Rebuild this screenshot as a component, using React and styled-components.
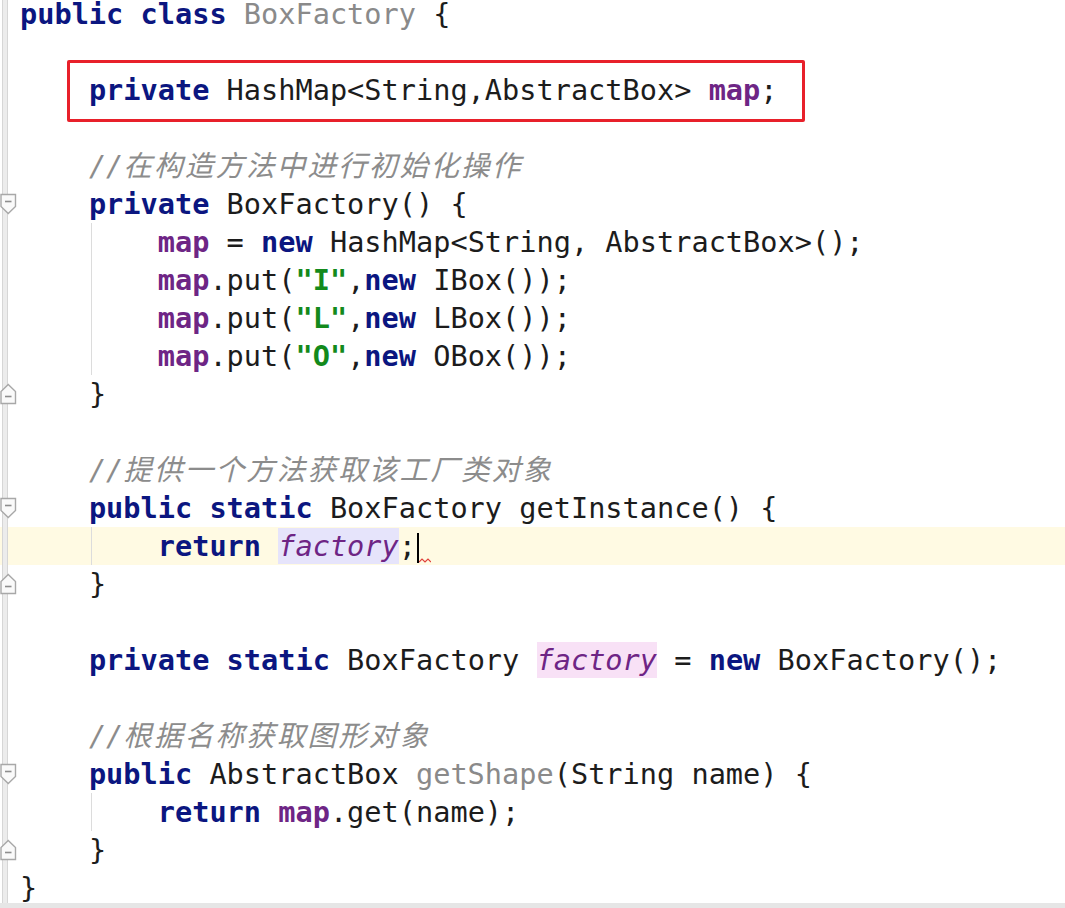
import React from "react";
import styled, { createGlobalStyle, css } from "styled-components";

const GlobalStyle = createGlobalStyle`
  html, body {
    margin: 0;
    padding: 0;
    background: #ffffff;
  }
`;

const LINE = 38;

const Editor = styled.div`
  position: relative;
  width: 1065px;
  height: 908px;
  box-sizing: border-box;
  border-bottom: 5px solid #e6e6e6;
  overflow: hidden;
  background: #fff;
`;

const Lines = styled.div`
  display: flex;
  flex-direction: column;
  margin-top: -5px;
`;

const Row = styled.div`
  position: relative;
  display: grid;
  grid-template-columns: 20px 1fr;
  height: ${LINE}px;
  align-items: center;
  background: ${(p) => (p.$current ? "#fffae3" : "transparent")};
  ${(p) =>
    p.$guide &&
    css`
      background-image: linear-gradient(
        to right,
        transparent 91px,
        #dcdcdc 91px,
        #dcdcdc 92px,
        transparent 92px
      );
    `}
`;

const Gutter = styled.div`
  height: 100%;
  display: flex;
  align-items: center;
  background: linear-gradient(
    to right,
    transparent 2px,
    #d6d6d6 2px,
    #d6d6d6 3px,
    #ececec 3px,
    #ececec 7px,
    #d6d6d6 7px,
    #d6d6d6 8px,
    transparent 8px
  );
`;

const Code = styled.div`
  font-family: "DejaVu Sans Mono", "Noto Sans CJK SC", monospace;
  font-size: 28.6px;
  line-height: ${LINE}px;
  height: ${LINE}px;
  white-space: pre;
  color: #1c1c1c;
`;

const Kw = styled.span`
  color: #0b1680;
  font-weight: bold;
`;

const Field = styled.span`
  color: #6e2585;
  font-weight: bold;
`;

const StaticField = styled.span`
  color: #6e2585;
  font-style: italic;
  display: inline-block;
  vertical-align: top;
  margin-top: 1px;
  height: ${LINE - 2}px;
  line-height: ${LINE - 2}px;
  background: ${(p) => p.$bg || "transparent"};
`;

const Str = styled.span`
  color: #138a1c;
  font-weight: bold;
`;

const Unused = styled.span`
  color: #8a8a8a;
`;

const Comment = styled.span`
  color: #8c8c8c;
  font-style: italic;
`;

const Cjk = styled.span`
  letter-spacing: 2.1px;
`;

const Caret = styled.span`
  display: inline-block;
  vertical-align: middle;
  width: 2px;
  height: 30px;
  background: #000;
  margin-left: 1px;
`;

const Squiggle = styled.svg`
  vertical-align: -8px;
`;

const Annotation = styled.div`
  position: absolute;
  left: 67px;
  top: -11px;
  width: 738px;
  height: 62px;
  box-sizing: border-box;
  border: 3px solid #e8202a;
  border-radius: 2px;
  pointer-events: none;
`;

function FoldMarker({ end }) {
  return (
    <svg width="17" height="22" viewBox="0 0 17 22">
      <g transform={end ? "translate(0 22) scale(1 -1)" : undefined}>
        <path
          d="M1 1.5 H15.5 V13.5 L8.25 20.5 L1 13.5 Z"
          fill="#fafafa"
          stroke="#a8a8a8"
          strokeWidth="1.4"
        />
      </g>
      <line
        x1="5"
        x2="11.5"
        y1={end ? 13.5 : 8.5}
        y2={end ? 13.5 : 8.5}
        stroke="#8e8e8e"
        strokeWidth="1.6"
      />
    </svg>
  );
}

function Line({ fold, guide, current, children, annotate }) {
  return (
    <Row $guide={guide} $current={current}>
      <Gutter>{fold && <FoldMarker end={fold === "end"} />}</Gutter>
      <Code>{children}</Code>
      {annotate && <Annotation />}
    </Row>
  );
}

const I1 = "    ";
const I2 = "        ";

export default function App() {
  return (
    <>
      <GlobalStyle />
      <Editor>
        <Lines>
          <Line>
            <Kw>public</Kw> <Kw>class</Kw> <Unused>BoxFactory</Unused> {"{"}
          </Line>
          <Line />
          <Line annotate>
            {I1}
            <Kw>private</Kw> HashMap&lt;String,AbstractBox&gt; <Field>map</Field>;
          </Line>
          <Line />
          <Line>
            {I1}
            <Comment>
              //<Cjk>在构造方法中进行初始化操作</Cjk>
            </Comment>
          </Line>
          <Line fold="start">
            {I1}
            <Kw>private</Kw> BoxFactory() {"{"}
          </Line>
          <Line guide>
            {I2}
            <Field>map</Field> = <Kw>new</Kw> HashMap&lt;String, AbstractBox&gt;();
          </Line>
          <Line guide>
            {I2}
            <Field>map</Field>.put(<Str>"I"</Str>,<Kw>new</Kw> IBox());
          </Line>
          <Line guide>
            {I2}
            <Field>map</Field>.put(<Str>"L"</Str>,<Kw>new</Kw> LBox());
          </Line>
          <Line guide>
            {I2}
            <Field>map</Field>.put(<Str>"O"</Str>,<Kw>new</Kw> OBox());
          </Line>
          <Line fold="end">{I1}{"}"}</Line>
          <Line />
          <Line>
            {I1}
            <Comment>
              //<Cjk>提供一个方法获取该工厂类对象</Cjk>
            </Comment>
          </Line>
          <Line fold="start">
            {I1}
            <Kw>public</Kw> <Kw>static</Kw> BoxFactory getInstance() {"{"}
          </Line>
          <Line guide current>
            {I2}
            <Kw>return</Kw> <StaticField $bg="#e6e4fb">factory</StaticField>;
            <Caret />
            <Squiggle width="12" height="6" viewBox="0 0 12 6">
              <path d="M0 4 L3 1 L6 4 L9 1 L12 4" fill="none" stroke="#e0403a" strokeWidth="1.2" />
            </Squiggle>
          </Line>
          <Line fold="end">{I1}{"}"}</Line>
          <Line />
          <Line>
            {I1}
            <Kw>private</Kw> <Kw>static</Kw> BoxFactory{" "}
            <StaticField $bg="#f8e1f6">factory</StaticField> = <Kw>new</Kw> BoxFactory();
          </Line>
          <Line />
          <Line>
            {I1}
            <Comment>
              //<Cjk>根据名称获取图形对象</Cjk>
            </Comment>
          </Line>
          <Line fold="start">
            {I1}
            <Kw>public</Kw> AbstractBox <Unused>getShape</Unused>(String name) {"{"}
          </Line>
          <Line guide>
            {I2}
            <Kw>return</Kw> <Field>map</Field>.get(name);
          </Line>
          <Line fold="end">{I1}{"}"}</Line>
          <Line>{"}"}</Line>
        </Lines>
      </Editor>
    </>
  );
}
